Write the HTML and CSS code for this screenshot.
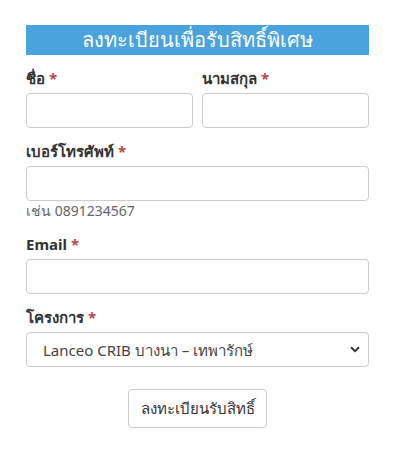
FILE: index.html
```html
<!doctype html>
<html lang="th">
  <head>
    <meta charset="utf-8">
    <title>ลงทะเบียนเพื่อรับสิทธิ์พิเศษ</title>
    <link rel="stylesheet" href="styles.css">
  </head>
  <body>
    <form class="signup">
      <h2 class="signup-title">ลงทะเบียนเพื่อรับสิทธิ์พิเศษ</h2>

      <div class="group row">
        <div class="field">
          <label>ชื่อ <span class="req">*</span></label>
          <input type="text" class="input">
        </div>
        <div class="field">
          <label>นามสกุล <span class="req">*</span></label>
          <input type="text" class="input">
        </div>
      </div>

      <div class="group field">
        <label>เบอร์โทรศัพท์ <span class="req">*</span></label>
        <input type="text" class="input">
        <p class="hint">เช่น 0891234567</p>
      </div>

      <div class="group field">
        <label>Email <span class="req">*</span></label>
        <input type="email" class="input">
      </div>

      <div class="group field">
        <label>โครงการ <span class="req">*</span></label>
        <div class="select-wrap">
          <select class="input select">
            <option>Lanceo CRIB บางนา – เทพารักษ์</option>
          </select>
          <svg class="chevron" width="10" height="7" viewBox="0 0 10 7"><path d="M1 1.2l4 4 4-4" fill="none" stroke="#333" stroke-width="2"/></svg>
        </div>
      </div>

      <div class="actions">
        <button type="button" class="btn">ลงทะเบียนรับสิทธิ์</button>
      </div>
    </form>
  </body>
</html>
```

FILE: styles.css
```css
html {
    font-family: "Noto Sans", "Open Sans", sans-serif;
    color: #333;
    background: #fff;
}

body { margin: 0; }

.signup {
    width: 343px;
    margin: 25px 0 0 26px;
}

.signup-title {
    margin: 0 0 10px;
    height: 30px;
    line-height: 30px;
    background: #4aa3dc;
    color: #fff;
    font-size: 20px;
    font-weight: 400;
    text-align: center;
}

.row {
    display: grid;
    grid-template-columns: 1fr 1fr;
    gap: 9px;
}

.group + .group {
    margin-top: 10px;
}

.field label {
    display: block;
    height: 20px;
    line-height: 20px;
    padding-top: 3px;
    margin-bottom: 5px;
    font-size: 15px;
    font-weight: 700;
}

.req { color: #b94a48; }

.input {
    display: block;
    box-sizing: border-box;
    width: 100%;
    height: 35px;
    margin: 0;
    border: 1px solid #ccc;
    border-radius: 4px;
    background: #fff;
    font: inherit;
}

.hint {
    margin: 0;
    height: 20px;
    line-height: 20px;
    font-size: 14px;
    color: #666;
}

.select-wrap { position: relative; }

.select {
    appearance: none;
    padding: 0 30px 0 16px;
    font-size: 15px;
    color: #444;
}

.chevron {
    position: absolute;
    right: 9px;
    top: 14px;
    pointer-events: none;
}

.actions {
    display: flex;
    justify-content: center;
    margin-top: 22px;
}

.btn {
    height: 39px;
    width: 139px;
    border: 1px solid #ccc;
    border-radius: 4px;
    background: #fff;
    color: #333;
    font: inherit;
    font-size: 15px;
}
```
